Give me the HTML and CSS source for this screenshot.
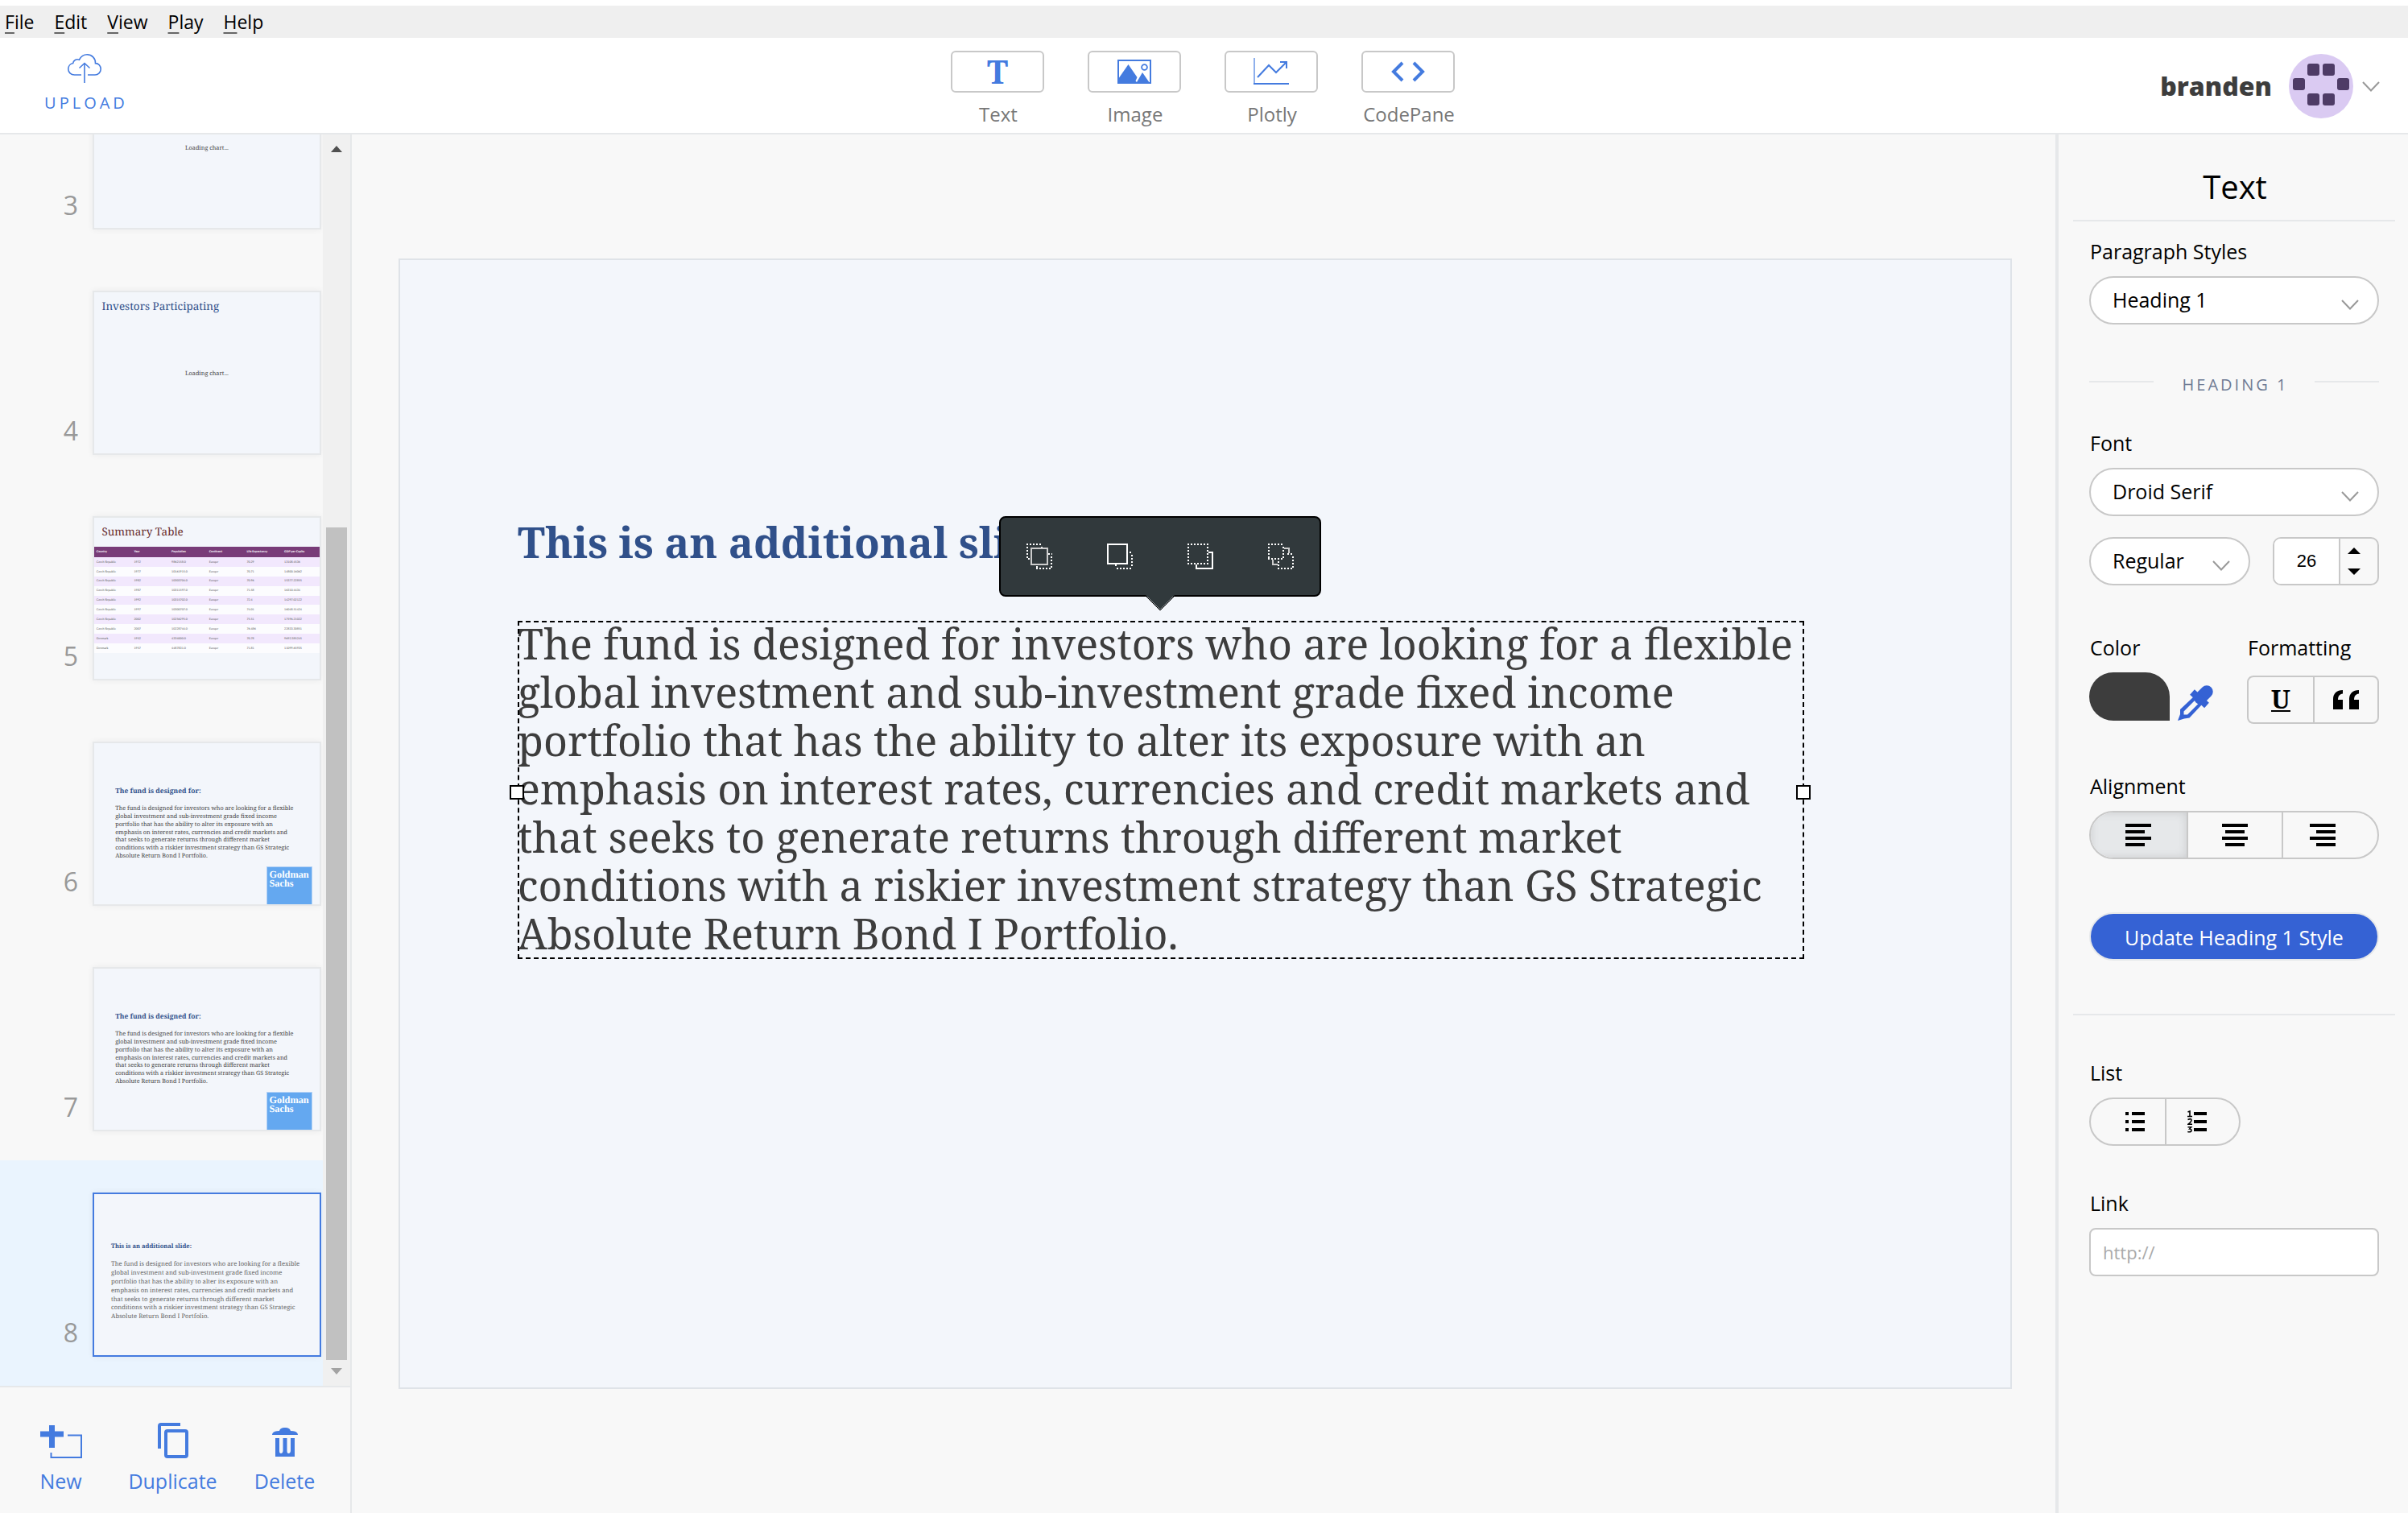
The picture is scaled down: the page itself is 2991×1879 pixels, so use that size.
FILE: index.html
```
<!DOCTYPE html>
<html lang="en">
<head>
<meta charset="utf-8">
<title>Slide editor</title>
<link rel="stylesheet" href="styles.css">
</head>
<body>
<nav class="menubar" aria-label="Application menu">
  <button type="button"><u>F</u>ile</button>
  <button type="button"><u>E</u>dit</button>
  <button type="button"><u>V</u>iew</button>
  <button type="button"><u>P</u>lay</button>
  <button type="button"><u>H</u>elp</button>
</nav>

<header class="topbar">
  <button type="button" class="upload">
    <svg width="42" height="36" viewBox="0 0 42 36" fill="none" stroke="currentColor" stroke-width="1.6"><path d="M17 26H8.500C4 26 .8 22.800 .8 18.700C.8 15 3.300 12 6.700 11.500C7 8 11 5.800 14.500 7.200C16.500 3.300 20 .8 24.200 .8C30 .8 34.800 5.400 34.500 11.600C38.500 11.600 41.200 15 41.200 18.800C41.200 22.800 38 26 34 26H25"/><path d="M21 12V36M14.500 17.500L21 11.500L27.500 17.500"/></svg>
    <span>UPLOAD</span>
  </button>
  <div class="tools">
    <button type="button" class="tool"><span class="tool-box tool-letter" aria-hidden="true">T</span><span>Text</span></button>
    <button type="button" class="tool"><span class="tool-box"><svg width="42" height="30" viewBox="0 0 42 30"><rect x="1" y="1" width="40" height="28" fill="none" stroke="currentColor" stroke-width="2"/><path d="M1 24L13.500 6L24.500 22L22.500 26.500L24 28L31 16L40 29H1z" fill="currentColor"/><circle cx="33.500" cy="9.500" r="3.400" fill="none" stroke="currentColor" stroke-width="1.800"/></svg></span><span>Image</span></button>
    <button type="button" class="tool"><span class="tool-box"><svg width="44" height="34" viewBox="0 0 44 34" fill="none" stroke="currentColor"><path d="M1 0V32" stroke-width="1.200"/><path d="M0 32H44" stroke-width="2"/><path d="M5 24L19 9L28 18L41 5M33 5H41V13" stroke-width="2"/></svg></span><span>Plotly</span></button>
    <button type="button" class="tool"><span class="tool-box"><svg width="42" height="26" viewBox="0 0 42 26" fill="none" stroke="currentColor" stroke-width="4"><path d="M14 2L3 13L14 24M28 2L39 13L28 24"/></svg></span><span>CodePane</span></button>
  </div>
  <button type="button" class="account">
    <span class="account-name">branden</span>
    <svg width="80" height="80" viewBox="0 0 80 80"><circle cx="40" cy="40" r="40" fill="#dacaf2"/><g fill="#4e3b66"><rect x="23" y="12" width="15" height="15" rx="3"/><rect x="42" y="12" width="15" height="15" rx="3"/><rect x="5" y="30" width="15" height="15" rx="3"/><rect x="60" y="30" width="15" height="15" rx="3"/><rect x="23" y="49" width="15" height="15" rx="3"/><rect x="42" y="49" width="15" height="15" rx="3"/></g></svg>
    <svg width="22" height="13" viewBox="0 0 22 13" fill="none" stroke="#999" stroke-width="2"><path d="M1 1L11 11.500L21 1"/></svg>
  </button>
</header>

<div class="workspace">
  <aside class="sidebar">
    <div class="slides">
      <ol class="slide-list">
        <li class="slide-item"><span class="slide-number">3</span>
          <div class="thumb"><div class="mini mini-chart"><p class="mini-loading">Loading chart...</p></div></div></li>
        <li class="slide-item"><span class="slide-number">4</span>
          <div class="thumb"><div class="mini"><h3 class="mini-title">Investors Participating</h3><p class="mini-loading">Loading chart...</p></div></div></li>
        <li class="slide-item"><span class="slide-number">5</span>
          <div class="thumb"><div class="mini"><h3 class="mini-title mini-title-red">Summary Table</h3>
            <table class="mini-table">
              <thead><tr><th>Country</th><th>Year</th><th>Population</th><th>Continent</th><th>Life Expectancy</th><th>GDP per Capita</th></tr></thead>
              <tbody>
                <tr><td>Czech Republic</td><td>1972</td><td>9862158.0</td><td>Europe</td><td>70.29</td><td>13108.4536</td></tr>
                <tr><td>Czech Republic</td><td>1977</td><td>10161915.0</td><td>Europe</td><td>70.71</td><td>14800.16062</td></tr>
                <tr><td>Czech Republic</td><td>1982</td><td>10303704.0</td><td>Europe</td><td>70.96</td><td>15377.22855</td></tr>
                <tr><td>Czech Republic</td><td>1987</td><td>10311597.0</td><td>Europe</td><td>71.58</td><td>16310.4434</td></tr>
                <tr><td>Czech Republic</td><td>1992</td><td>10315702.0</td><td>Europe</td><td>72.4</td><td>14297.02122</td></tr>
                <tr><td>Czech Republic</td><td>1997</td><td>10300707.0</td><td>Europe</td><td>74.01</td><td>16048.51424</td></tr>
                <tr><td>Czech Republic</td><td>2002</td><td>10256295.0</td><td>Europe</td><td>75.51</td><td>17596.21022</td></tr>
                <tr><td>Czech Republic</td><td>2007</td><td>10228744.0</td><td>Europe</td><td>76.486</td><td>22833.30851</td></tr>
                <tr><td>Denmark</td><td>1952</td><td>4334000.0</td><td>Europe</td><td>70.78</td><td>9692.385245</td></tr>
                <tr><td>Denmark</td><td>1957</td><td>4487831.0</td><td>Europe</td><td>71.81</td><td>11099.65935</td></tr>
              </tbody>
            </table></div></div></li>
        <li class="slide-item"><span class="slide-number">6</span>
          <div class="thumb"><div class="mini mini-fund"><h3>The fund is designed for:</h3><p>The fund is designed for investors who are looking for a flexible global investment and sub-investment grade fixed income portfolio that has the ability to alter its exposure with an emphasis on interest rates, currencies and credit markets and that seeks to generate returns through different market conditions with a riskier investment strategy than GS Strategic Absolute Return Bond I Portfolio.</p><div class="mini-logo">Goldman<br>Sachs</div></div></div></li>
        <li class="slide-item"><span class="slide-number">7</span>
          <div class="thumb"><div class="mini mini-fund"><h3>The fund is designed for:</h3><p>The fund is designed for investors who are looking for a flexible global investment and sub-investment grade fixed income portfolio that has the ability to alter its exposure with an emphasis on interest rates, currencies and credit markets and that seeks to generate returns through different market conditions with a riskier investment strategy than GS Strategic Absolute Return Bond I Portfolio.</p><div class="mini-logo">Goldman<br>Sachs</div></div></div></li>
        <li class="slide-item is-selected" aria-current="true"><span class="slide-number">8</span>
          <div class="thumb"><div class="mini mini-extra"><h3>This is an additional slide:</h3><p>The fund is designed for investors who are looking for a flexible global investment and sub-investment grade fixed income portfolio that has the ability to alter its exposure with an emphasis on interest rates, currencies and credit markets and that seeks to generate returns through different market conditions with a riskier investment strategy than GS Strategic Absolute Return Bond I Portfolio.</p></div></div></li>
      </ol>
      <div class="scrollbar" aria-hidden="true">
        <svg width="14" height="8" viewBox="0 0 14 8"><path d="M0 8L7 0L14 8z" fill="#505050"/></svg>
        <div class="scroll-track"><div class="scroll-thumb"></div></div>
        <svg width="14" height="8" viewBox="0 0 14 8"><path d="M0 0L7 8L14 0z" fill="#a3a3a3"/></svg>
      </div>
    </div>
    <div class="slide-actions">
      <button type="button"><svg width="52" height="44" viewBox="0 0 52 44"><path d="M0 14H29M14.500 3V31" stroke="currentColor" stroke-width="7"/><path d="M34 15.500H51V43H13.500V37" fill="none" stroke="currentColor" stroke-width="2"/></svg>New</button>
      <button type="button"><svg width="38" height="44" viewBox="0 0 38 44" fill="none" stroke="currentColor" stroke-width="4"><path d="M2 32V4Q2 2 4 2H28"/><rect x="10" y="10" width="26" height="32" rx="2"/></svg>Duplicate</button>
      <button type="button"><svg width="32" height="38" viewBox="0 0 32 38" fill="currentColor"><path d="M0 9C0 6 3 4 9 4C10 1 12 0 16 0S22 1 23 4C29 4 32 6 32 9z"/><path d="M4 13H9V29Q9 32 11 32T13.500 29V13H18.500V29Q18.500 32 20.500 32T23 29V13H28V36H4z"/></svg>Delete</button>
    </div>
  </aside>

  <main class="stage">
    <section class="slide">
      <h1 class="slide-heading">This is an additional slide:</h1>
      <div class="slide-text">
        <p>The fund is designed for investors who are looking for a flexible global investment and sub-investment grade fixed income portfolio that has the ability to alter its exposure with an emphasis on interest rates, currencies and credit markets and that seeks to generate returns through different market conditions with a riskier investment strategy than GS Strategic Absolute Return Bond I Portfolio.</p>
        <span class="handle handle-left"></span>
        <span class="handle handle-right"></span>
        <div class="arrange">
          <button type="button" aria-label="Bring forward"><svg width="32" height="32" viewBox="0 0 32 32" fill="none" stroke="#fff" stroke-width="2"><path d="M0 1H20M0 31M1 4V20M2 19H5M19 4V5M27 13H32M12 31H32M31 16V30M13 28V30" stroke-dasharray="2 2"/><rect x="6" y="6" width="20" height="20" stroke="#ccc"/></svg></button>
          <button type="button" aria-label="Bring to front"><svg width="32" height="32" viewBox="0 0 32 32" fill="none" stroke="#fff" stroke-width="2"><rect x="1" y="1" width="24" height="24"/><path d="M28 11H32M31 14V30M12 31H32M11 26V30" stroke-dasharray="2 2"/></svg></button>
          <button type="button" aria-label="Send to back"><svg width="32" height="32" viewBox="0 0 32 32" fill="none" stroke="#fff" stroke-width="2"><path d="M0 1H26M0 25H26M1 4V24M25 4V24" stroke-dasharray="2 2"/><path d="M26 11H31V31H11V26"/></svg></button>
          <button type="button" aria-label="Send backward"><svg width="32" height="32" viewBox="0 0 32 32" fill="none" stroke="#fff" stroke-width="2"><path d="M0 1H20M0 19H20M1 4V18M19 4V18M24 13H32M12 31H32M31 16V30M13 22V30" stroke-dasharray="2 2"/><path d="M20 6H26V12M6 20V26H12" stroke="#ccc"/></svg></button>
          <svg class="arrange-tip" width="36" height="20" viewBox="0 0 36 20"><path d="M0 0L18 18L36 0z" fill="#31393c"/><path d="M0 1L18 19L36 1" fill="none" stroke="#000" stroke-width="1"/></svg>
        </div>
      </div>
    </section>
  </main>

  <aside class="inspector">
    <h2 class="inspector-title">Text</h2>
    <div class="group">
      <label for="para">Paragraph Styles</label>
      <div class="select"><select id="para"><option>Heading 1</option></select><svg width="22" height="13" viewBox="0 0 22 13"><path d="M1 1L11 11.500L21 1"/></svg></div>
      <div class="divider"><span>HEADING 1</span></div>
      <label for="font">Font</label>
      <div class="select"><select id="font"><option>Droid Serif</option></select><svg width="22" height="13" viewBox="0 0 22 13"><path d="M1 1L11 11.500L21 1"/></svg></div>
      <div class="row font-row">
        <div class="select select-short"><select aria-label="Font weight"><option>Regular</option></select><svg width="22" height="13" viewBox="0 0 22 13"><path d="M1 1L11 11.500L21 1"/></svg></div>
        <div class="stepper">
          <input type="number" value="26" aria-label="Font size">
          <div class="stepper-arrows">
            <button type="button" aria-label="Increase"><svg width="16" height="8" viewBox="0 0 16 8"><path d="M0 8L8 0L16 8z"/></svg></button>
            <button type="button" aria-label="Decrease"><svg width="16" height="8" viewBox="0 0 16 8"><path d="M0 0L8 8L16 0z"/></svg></button>
          </div>
        </div>
      </div>
      <div class="row look-row">
        <div>
          <span class="label">Color</span>
          <div class="color">
            <button type="button" class="swatch" aria-label="Text color"></button>
            <button type="button" class="dropper" aria-label="Pick a color"><svg width="44" height="44" viewBox="0 0 44 44"><g stroke="#3562d4" fill="none"><path d="M36 8L28 16" stroke-width="15.500" stroke-linecap="round"/><path d="M18 8.500L36 25" stroke-width="8.500"/></g><path fill="#3562d4" fill-rule="evenodd" d="M20 14L30 24L14.500 40.500L8 41.500L0 44L3 36V30zM22 18L7.500 32.500V36.500H12L26.500 22z"/></svg></button>
          </div>
        </div>
        <div>
          <span class="label">Formatting</span>
          <div class="segments segments-square">
            <button type="button" class="underline" aria-label="Underline"><span>U</span></button>
            <button type="button" aria-label="Quote"><svg width="32" height="24" viewBox="0 0 32 24"><path d="M12 0V4.500C8 5 6 7.500 6 12H12V24H0V11C0 4.500 4.500 0 12 0zM32 0V4.500C28 5 26 7.500 26 12H32V24H20V11C20 4.500 24.500 0 32 0z"/></svg></button>
          </div>
        </div>
      </div>
      <span class="label">Alignment</span>
      <div class="segments segments-align">
        <button type="button" class="is-on" aria-pressed="true" aria-label="Align left"><svg width="32" height="28" viewBox="0 0 32 28"><path d="M0 0H32V4H0zM0 8H24V12H0zM0 16H32V20H0zM0 24H24V28H0z"/></svg></button>
        <button type="button" aria-pressed="false" aria-label="Align center"><svg width="32" height="28" viewBox="0 0 32 28"><path d="M0 0H32V4H0zM4 8H28V12H4zM0 16H32V20H0zM4 24H28V28H4z"/></svg></button>
        <button type="button" aria-pressed="false" aria-label="Align right"><svg width="32" height="28" viewBox="0 0 32 28"><path d="M0 0H32V4H0zM8 8H32V12H8zM0 16H32V20H0zM8 24H32V28H8z"/></svg></button>
      </div>
      <button type="button" class="update">Update Heading 1 Style</button>
    </div>
    <div class="group group-link">
      <span class="label">List</span>
      <div class="segments segments-list">
        <button type="button" aria-label="Bulleted list"><svg width="24" height="24" viewBox="0 0 24 24"><path d="M0 0H4V4H0zM0 10H4V14H0zM0 20H4V24H0zM8 0H24V4H8zM8 10H24V14H8zM8 20H24V24H8z"/></svg></button>
        <button type="button" aria-label="Numbered list"><svg width="24" height="28" viewBox="0 0 24 28"><path d="M8 2H24V6H8zM8 12H24V16H8zM8 22H24V26H8z"/><path d="M.5 2L3 1V8M0 7.500H6M.5 11.500Q5 9.500 5 12Q5 14 1 17.200H6M.5 20.700H4.700L2.700 23Q5.200 23 5 25Q4.500 27.500 .3 26.500" fill="none" stroke="#000" stroke-width="1.600"/></svg></button>
      </div>
      <label for="link">Link</label>
      <input id="link" class="link" type="text" placeholder="http://">
    </div>
  </aside>
</div>
</body>
</html>
```
FILE: styles.css
```
* { box-sizing: border-box; }

body {
  margin: 0;
  height: 100vh;
  display: flex;
  flex-direction: column;
  overflow: hidden;
  background: #f8f8f8;
  color: #000;
  font: 24px/32px "Open Sans", "Noto Sans", sans-serif;
}

h1, h2, h3, p, ol { margin: 0; padding: 0; font-weight: 400; }

button, input, select { font: inherit; color: inherit; }

button {
  margin: 0;
  padding: 0;
  border: 0;
  background: none;
  cursor: pointer;
}

svg { display: block; flex: none; }

/* Menu bar */
.menubar {
  flex: none;
  display: flex;
  gap: 25px;
  height: 47px;
  padding-left: 6px;
  border-top: 7px solid #fff;
  background: #efefef;
  font-size: 23px;
}
.menubar u { text-underline-offset: 4px; text-decoration-thickness: 2px; text-decoration-color: #666; }

/* Top bar */
.topbar {
  flex: none;
  display: grid;
  grid-template-columns: 1fr auto 1fr;
  align-items: start;
  height: 120px;
  padding-right: 3px;
  background: #fff;
  border-bottom: 2px solid #e6e8ea;
}
.upload {
  justify-self: start;
  display: flex;
  flex-direction: column;
  align-items: center;
  gap: 11px;
  width: 112px;
  margin: 20px 0 0 49px;
  color: #447bdf;
  font-size: 20px;
  line-height: 28px;
}
.upload span { letter-spacing: 4px; margin-right: -4px; }
.tools { display: flex; gap: 54px; padding-top: 16px; }
.tool {
  display: flex;
  flex-direction: column;
  align-items: center;
  gap: 11px;
  width: 116px;
  color: #777;
}
.tool-box + span { padding-left: 2px; }
.tool-box {
  display: flex;
  align-items: center;
  justify-content: center;
  width: 100%;
  height: 52px;
  border: 2px solid #c8c8c8;
  border-radius: 6px;
  color: #447bdf;
}
.tool-letter { font: 700 40px/48px "Noto Serif", serif; }
.account {
  justify-self: end;
  display: flex;
  align-items: center;
  margin: 20px 32px 0 0;
}
.account svg + svg { margin-left: 11px; }
.account-name {
  margin-right: 21px;
  color: #3d3d3d;
  font-size: 32px;
  line-height: 44px;
  font-weight: 800;
}

.workspace { flex: 1; display: flex; min-height: 0; }

/* Slide list */
.sidebar {
  flex: none;
  display: flex;
  flex-direction: column;
  width: 437px;
  border-right: 2px solid #e6e8ea;
}
.slides { flex: 1; display: flex; min-height: 0; }
.slide-list {
  flex: 1;
  display: flex;
  flex-direction: column;
  justify-content: flex-end;
  overflow: hidden;
  list-style: none;
}
.slide-item {
  flex: none;
  display: flex;
  justify-content: flex-end;
  align-items: flex-end;
  gap: 18px;
  padding: 40px 2px 36px 0;
}
.slide-item.is-selected { background: #eaf4fe; }
.slide-number { padding-bottom: 10px; color: #999; font-size: 32px; line-height: 40px; }
.thumb {
  flex: none;
  width: 284px;
  height: 204px;
  overflow: hidden;
  border: 2px solid #e6e8ea;
  background: #f3f6fb;
  box-shadow: 0 0 8px rgba(0, 0, 0, .06);
}
.is-selected .thumb { border-color: #447bdf; }

.scrollbar {
  flex: none;
  display: flex;
  flex-direction: column;
  align-items: center;
  gap: 14px;
  width: 34px;
  padding: 14px 0;
  background: #f0f0f0;
}
.scroll-track { flex: 1; display: flex; align-items: flex-end; margin-bottom: -4px; }
.scroll-thumb { width: 26px; height: 69.6%; background: #c1c1c1; }

.slide-actions {
  flex: none;
  display: grid;
  grid-template-columns: repeat(3, 1fr);
  padding: 44px 12px 24px 6px;
  border-top: 2px solid #e6e8ea;
  color: #447bdf;
  font-size: 25px;
}
.slide-actions button {
  display: flex;
  flex-direction: column;
  align-items: center;
  justify-content: flex-end;
  gap: 12px;
  height: 88px;
}

/* Miniature slides: 2000px-wide slides at 14% */
.mini {
  position: relative;
  zoom: 0.14;
  width: 2000px;
  height: 1428px;
  overflow: hidden;
  color: #444;
  font: 52px/70px "Noto Serif", "Droid Serif", serif;
  text-rendering: geometricPrecision;
}
.mini h3 { color: #30508a; }
.mini-title { padding: 62px 68px 0; font-size: 96px; line-height: 120px; }
.mini .mini-title-red { color: #682c2c; }
.mini-loading { margin-top: 511px; text-align: center; }
.mini-chart { padding-top: 182px; }
.mini-fund { padding: 394px 216px 0 187px; }
.mini-fund h3, .mini-extra h3 { font-weight: 700; }
.mini-fund p { margin-top: 87px; }
.mini-logo {
  position: absolute;
  left: 1530px;
  top: 1094px;
  width: 406px;
  height: 406px;
  padding: 28px 16px;
  border: 8px solid #b4d2f5;
  background: #64a8f0;
  color: #fff;
  font: 700 88px/80px "Liberation Serif", serif;
}
.mini-extra { padding: 430px 120px 0 150px; font-size: 55px; line-height: 77px; }
.mini-extra h3 { font-size: 54px; }
.mini-extra p { margin-top: 82px; color: #666; }
.mini-table {
  width: 100%;
  margin-top: 74px;
  border-collapse: collapse;
  table-layout: fixed;
  color: #555;
  font: 26px/32px Lato, sans-serif;
}
.mini-table th, .mini-table td { height: 85px; padding: 0 20px; text-align: left; }
.mini-table th { height: 94px; background: #783c78; color: #fff; font-weight: 900; }
.mini-table td { background: #fcfcfe; }
.mini-table tr:nth-child(odd) td { background: #f2e8fd; }

/* Stage */
.stage { flex: 1; display: flex; align-items: center; padding: 0 54px 0 58px; }
.slide {
  position: relative;
  width: 100%;
  aspect-ratio: 501 / 351;
  border: 2px solid #dfe3e8;
  background: #f3f6fb;
  font: 52px/60px "Noto Serif", "Droid Serif", serif;
}
.slide-heading {
  position: absolute;
  left: 146px;
  top: 320px;
  color: #30508a;
  font-size: 52px;
  font-weight: 700;
  white-space: nowrap;
}
.slide-text {
  position: absolute;
  left: 146px;
  top: 448px;
  width: 1598px;
  color: #3d3d3d;
}
.slide-text::after {
  content: "";
  position: absolute;
  inset: 0;
  border: 2px dashed #000;
  pointer-events: none;
}
.slide-text p { margin-top: -2px; padding-bottom: 2px; }
.handle {
  position: absolute;
  z-index: 1;
  top: 50%;
  width: 18px;
  height: 18px;
  margin-top: -6px;
  border: 2px solid #000;
  background: #fff;
}
.handle-left { left: -10px; }
.handle-right { right: -8px; }

.arrange {
  position: absolute;
  left: 50%;
  bottom: 100%;
  display: grid;
  grid-template-columns: repeat(4, 100px);
  justify-content: center;
  width: 400px;
  height: 100px;
  margin: 0 0 30px -201px;
  border: 2px solid #000;
  border-radius: 8px;
  background: #31393c;
}
.arrange button { display: flex; align-items: center; justify-content: center; }
.arrange-tip { position: absolute; left: 180px; top: 96px; }

/* Inspector */
.inspector {
  flex: none;
  width: 438px;
  padding: 36px 16px 0 18px;
  border-left: 4px solid #e6e8ea;
}
.inspector-title {
  padding: 0 0 12px 2px;
  border-bottom: 2px solid #e6e8ea;
  font-size: 40px;
  line-height: 58px;
  text-align: center;
}
.group { padding: 20px 20px 66px; }
.group-link { padding-top: 54px; border-top: 2px solid #e6e8ea; }
.inspector label, .label {
  display: block;
  margin-bottom: 14px;
  padding-left: 1px;
  font-size: 25px;
  line-height: 34px;
}

.row { display: flex; justify-content: space-between; }
.select { position: relative; }
.select select {
  display: block;
  width: 100%;
  height: 60px;
  padding: 0 28px 2px 27px;
  border: 2px solid #c8c8c8;
  border-radius: 30px;
  background: #fff;
  font-size: 25px;
  appearance: none;
}
.select svg {
  position: absolute;
  right: 25px;
  top: 29px;
  fill: none;
  stroke: #999;
  stroke-width: 2px;
  pointer-events: none;
}
.select-short { width: 200px; }

.divider {
  display: flex;
  justify-content: space-between;
  align-items: flex-start;
  margin: 60px 0 40px;
  color: #6f7b94;
  font-size: 20px;
  line-height: 30px;
}
.divider span { letter-spacing: 3px; margin-right: -3px; }
.divider::before, .divider::after {
  content: "";
  width: 80px;
  margin-top: 10px;
  border-top: 2px solid #e6e8ea;
}

.font-row { margin: 26px 0 60px; }
.stepper {
  display: flex;
  width: 132px;
  height: 60px;
  overflow: hidden;
  border: 2px solid #c8c8c8;
  border-radius: 10px;
}
.stepper input {
  width: 82px;
  padding: 0;
  border: 0;
  border-right: 2px solid #c8c8c8;
  background: #fff;
  font: 22px "Liberation Sans", Arial, sans-serif;
  text-align: center;
  appearance: textfield;
}
.stepper input::-webkit-inner-spin-button { appearance: none; margin: 0; }
.stepper-arrows {
  display: flex;
  flex-direction: column;
  justify-content: center;
  gap: 18px;
  padding-left: 9px;
}

.look-row { margin-bottom: 60px; }
.color { display: flex; gap: 10px; }
.swatch { width: 100px; height: 60px; border-radius: 30px 30px 0 30px; background: #3d3d3d; }
.dropper { padding-top: 15px; }

.segments {
  display: grid;
  grid-auto-flow: column;
  grid-auto-columns: minmax(0, 1fr);
  height: 60px;
  overflow: hidden;
  border: 2px solid #c8c8c8;
  border-radius: 30px;
}
.segments button {
  display: flex;
  align-items: center;
  justify-content: center;
}
.segments button + button { border-left: 2px solid #c8c8c8; }
.segments .is-on { background: #e6e8ea; box-shadow: inset 0 0 12px rgba(0, 0, 0, .12); }
.segments-square { width: 164px; margin-top: 18px; border-radius: 8px; }
.segments-align button:last-child { padding-right: 20px; }
.segments-list { width: 188px; margin-bottom: 54px; }
.segments-list button:first-child { padding-left: 18px; }
.segments-list button:last-child { padding-right: 14px; }
.underline span {
  border-bottom: 2px solid #000;
  font: 700 32px/28px "Noto Serif", serif;
}

.update {
  display: block;
  width: 100%;
  height: 60px;
  margin-top: 66px;
  padding-top: 2px;
  border: 2px solid #e6e8ea;
  border-radius: 30px;
  background: #3562d4;
  color: #fff;
  font-size: 25px;
}

.link {
  display: block;
  width: 100%;
  height: 60px;
  padding: 0 15px;
  border: 2px solid #c8c8c8;
  border-radius: 8px;
  background: #fff;
  font-size: 22px;
}
.link::placeholder { color: #aaa; }
```
